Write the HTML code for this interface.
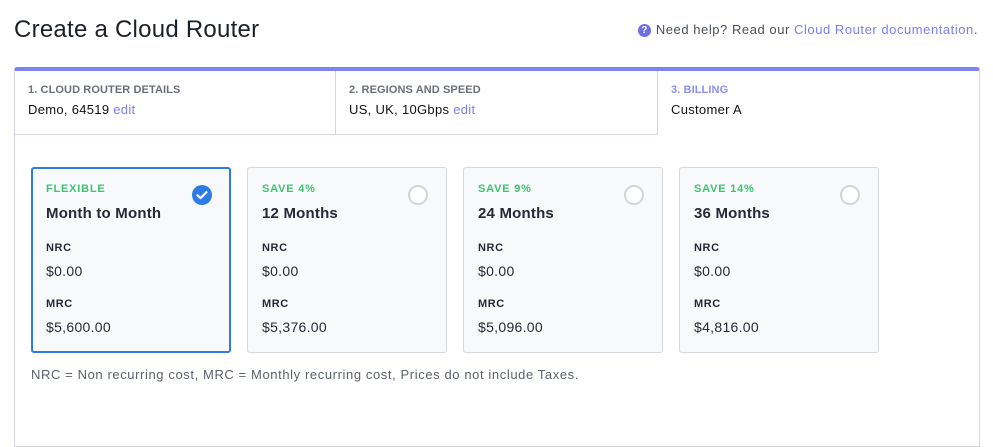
<!DOCTYPE html>
<html><head><style>
*{box-sizing:border-box;margin:0;padding:0}
body{width:993px;height:428px;overflow:hidden;background:#fff;font-family:"Liberation Sans",sans-serif;color:#1f2330;position:relative}
.a{position:absolute;white-space:nowrap}
h1{position:absolute;left:14px;top:16px;font-size:24px;font-weight:normal;color:#1c2029;letter-spacing:.25px}
.help{right:15px;top:22px;font-size:13px;color:#4a4f5c;letter-spacing:.55px}
.help a{color:#7b7ff0;text-decoration:none}
.q{display:inline-block;width:13px;height:13px;border-radius:50%;background:#6c6fe8;color:#fff;font-size:10px;font-weight:bold;text-align:center;line-height:13px;vertical-align:1px;margin-right:5px;letter-spacing:0}
.box{position:absolute;left:14px;top:67px;width:966px;height:380px;border:1px solid #d3d6e2;border-top:4px solid #7f82f0;border-radius:3px 3px 0 0}
.tab{position:absolute;top:71px;height:64px;border-bottom:1px solid #d3d6e2}
.tl{font-size:11px;font-weight:bold;color:#6a6f7c;position:absolute;left:13px;top:13px;letter-spacing:.1px}
.tv{font-size:13px;position:absolute;left:13px;top:31px;color:#111;letter-spacing:.3px}
.tv a{color:#7b7ff0}
.card{position:absolute;top:167px;width:200px;height:186px;background:#f8f9fb;border:1px solid #d6d8de;border-radius:3px}
.card.sel{border:2px solid #2f7be5}
.card .c{position:absolute;left:14px}
.card.sel .c{left:13px}
.lab{top:15px;font-size:11px;font-weight:bold;color:#3ec46f;letter-spacing:.8px}
.ti{top:37px;font-size:15px;font-weight:bold;color:#262a35;letter-spacing:.2px}
.k{font-size:11px;font-weight:bold;color:#262a35;letter-spacing:.6px}
.v{font-size:14px;color:#262a35;letter-spacing:.3px}
.rad{position:absolute;right:18px;top:17px;width:20px;height:20px;border-radius:50%;border:2px solid #d3d5da;background:#fff}
</style></head><body>
<h1>Create a Cloud Router</h1>
<div class="a help"><span class="q">?</span>Need help? Read our <a>Cloud Router documentation</a>.</div>
<div class="box"></div>
<div class="tab" style="left:15px;width:321px;border-right:1px solid #d3d6e2"><div class="tl">1. CLOUD ROUTER DETAILS</div><div class="tv">Demo, 64519 <a>edit</a></div></div>
<div class="tab" style="left:336px;width:322px;border-right:1px solid #d3d6e2"><div class="tl">2. REGIONS AND SPEED</div><div class="tv">US, UK, 10Gbps <a>edit</a></div></div>
<div class="tab" style="left:658px;width:320px;border-bottom:none"><div class="tl" style="color:#8c8ff0">3. BILLING</div><div class="tv">Customer A</div></div>

<div class="card sel" style="left:31px">
<div class="c lab" style="top:14px">FLEXIBLE</div><div class="c ti" style="top:36px">Month to Month</div>
<div class="c k" style="top:73px">NRC</div><div class="c v" style="top:94px">$0.00</div>
<div class="c k" style="top:129px">MRC</div><div class="c v" style="top:150px">$5,600.00</div>
<svg style="position:absolute;right:17px;top:16px" width="20" height="20" viewBox="0 0 20 20"><circle cx="10" cy="10" r="10" fill="#2f7be5"/><path d="M5.5 10.3l3 2.8 6-6" stroke="#fff" stroke-width="2.2" fill="none" stroke-linecap="round" stroke-linejoin="round"/></svg>
</div>
<div class="card" style="left:247px">
<div class="c lab">SAVE 4%</div><div class="c ti">12 Months</div>
<div class="c k" style="top:74px">NRC</div><div class="c v" style="top:95px">$0.00</div>
<div class="c k" style="top:130px">MRC</div><div class="c v" style="top:151px">$5,376.00</div><div class="rad"></div></div>
<div class="card" style="left:463px">
<div class="c lab">SAVE 9%</div><div class="c ti">24 Months</div>
<div class="c k" style="top:74px">NRC</div><div class="c v" style="top:95px">$0.00</div>
<div class="c k" style="top:130px">MRC</div><div class="c v" style="top:151px">$5,096.00</div><div class="rad"></div></div>
<div class="card" style="left:679px">
<div class="c lab">SAVE 14%</div><div class="c ti">36 Months</div>
<div class="c k" style="top:74px">NRC</div><div class="c v" style="top:95px">$0.00</div>
<div class="c k" style="top:130px">MRC</div><div class="c v" style="top:151px">$4,816.00</div><div class="rad"></div></div>
<div class="a" style="left:31px;top:367px;font-size:13px;color:#5c616d;letter-spacing:.6px">NRC = Non recurring cost, MRC = Monthly recurring cost, Prices do not include Taxes.</div>
</body></html>
